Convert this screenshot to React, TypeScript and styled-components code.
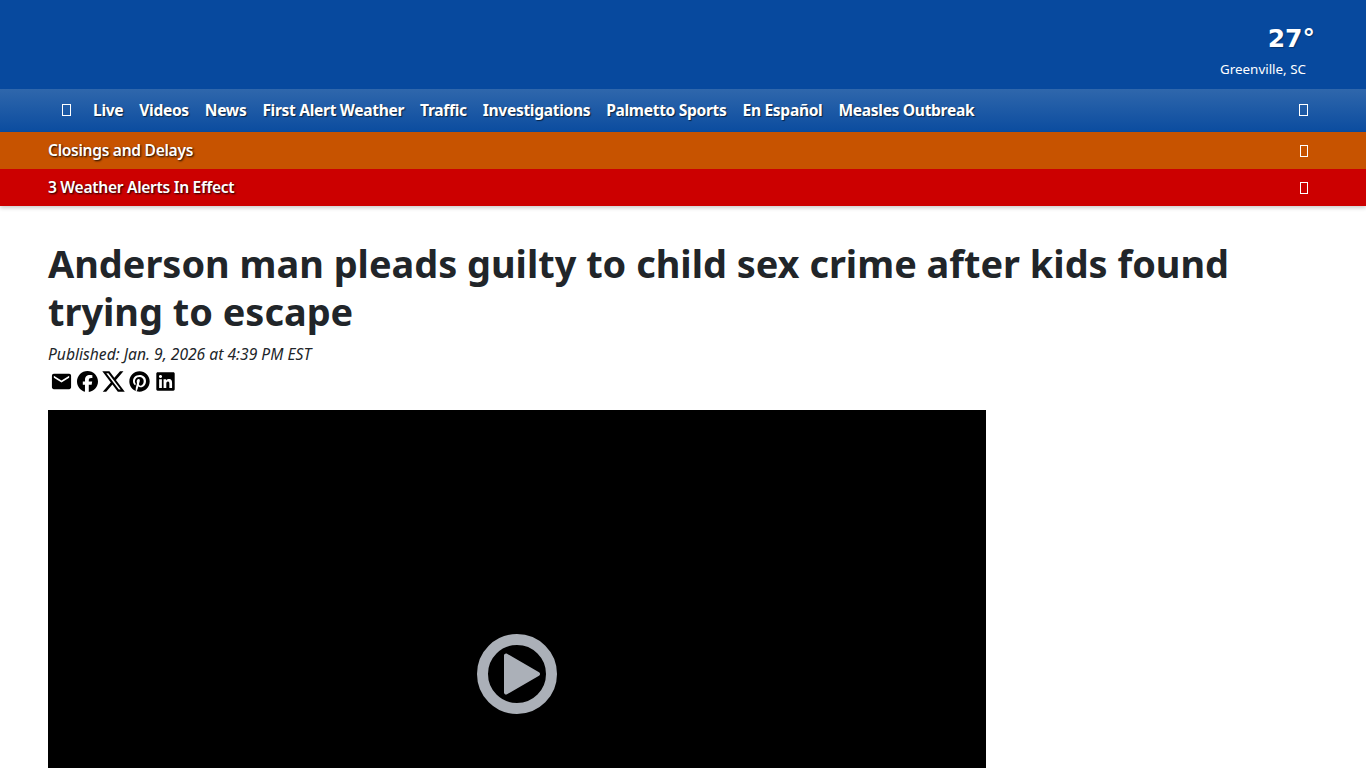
import React from 'react';
import styled, { createGlobalStyle } from 'styled-components';
import { MdEmail } from 'react-icons/md';
import { FaFacebook, FaLinkedin, FaPinterest, FaXTwitter } from 'react-icons/fa6';

const GlobalStyle = createGlobalStyle`
  html, body {
    margin: 0;
    padding: 0;
    background: #fff;
  }
  body {
    font-family: "Noto Sans", "Open Sans", sans-serif;
    color: #212529;
    overflow: hidden;
  }
`;

const Page = styled.div`
  height: 768px;
  overflow: hidden;
`;

// Banner with the weather
const TopBanner = styled.header`
  height: 89px;
  background-color: #07499e;
  display: flex;
  justify-content: flex-end;
  padding-right: 52px;
`;

const Weather = styled.div`
  display: flex;
  flex-direction: column;
  align-items: flex-end;
  color: #fff;
  padding-top: 22px;
`;

const Temperature = styled.div`
  font-family: "DejaVu Sans", sans-serif;
  font-weight: 700;
  font-size: 25px;
  line-height: 34px;
  margin-right: -1px;
  text-shadow: 1px 1px 1px rgba(0, 0, 0, 0.3);
`;

const City = styled.div`
  font-size: 13.4px;
  line-height: 18px;
  margin-top: 4px;
  margin-right: 8px;
`;

const Nav = styled.nav`
  height: 43px;
  padding: 0 58px 2px 62px;
  box-sizing: border-box;
  background: linear-gradient(to bottom, #2f67ac 0%, #0b4c9f 100%);
  display: flex;
  align-items: center;
`;

const NavLinks = styled.div`
  display: flex;
  align-items: center;
  gap: 16px;
  flex: 1;
  margin-left: 22px;
`;

const NavLink = styled.a`
  color: #fff;
  font-size: 15.6px;
  font-weight: 700;
  letter-spacing: -0.33px;
  text-shadow: 1px 1px 1px rgba(0, 0, 0, 0.6);
  white-space: nowrap;
`;

// The icon font is missing in the picture, so each icon is an empty box
const MissingGlyph = styled.span<{ $width: number }>`
  display: block;
  box-sizing: border-box;
  width: ${(p) => p.$width}px;
  height: 12px;
  border: 1px solid #fff;
  flex: none;
`;

const AlertBar = styled.div<{ $color: string }>`
  height: 37px;
  box-sizing: border-box;
  padding: 0 58px 2px 48px;
  background-color: ${(p) => p.$color};
  display: flex;
  align-items: center;
  justify-content: space-between;
  color: #fff;
  font-size: 15.6px;
  font-weight: 600;
  letter-spacing: -0.3px;
  text-shadow: 1px 1px 2px rgba(0, 0, 0, 0.9);

  ${MissingGlyph} {
    margin-top: 2px;
  }
`;

const Alerts = styled.div`
  box-shadow: 0 2px 4px rgba(0, 0, 0, 0.2);
  position: relative;
`;

const Article = styled.main`
  padding: 33px 48px 0;
`;

const Headline = styled.h1`
  margin: 0;
  font-size: 37.9px;
  line-height: 48px;
  font-weight: 700;
  color: #212529;
`;

const Published = styled.div`
  font-size: 15.65px;
  font-style: italic;
  line-height: 22px;
  margin-top: 8px;
  color: #212529;
`;

const ShareRow = styled.div`
  display: flex;
  margin-top: 3px;
  height: 26px;
`;

const ShareButton = styled.a<{ $size?: number }>`
  width: 26px;
  height: 26px;
  display: flex;
  align-items: center;
  justify-content: center;
  color: #000;
  font-size: ${(p) => p.$size ?? 21}px;
`;

const Video = styled.div`
  width: 938px;
  aspect-ratio: 16 / 9;
  margin-top: 16px;
  background: #000;
  display: flex;
  align-items: center;
  justify-content: center;
`;

const PlayIcon = () => (
  <svg width="80" height="80" viewBox="0 0 80 80" fill="none">
    <circle cx="40" cy="40" r="34.5" stroke="#abb0b8" strokeWidth="11" />
    <path
      d="M27 21.5c0-1.6 1.7-2.5 3-1.8l32 18.6c1.4.7 1.4 2.7 0 3.4l-32 18.6c-1.3.7-3-.2-3-1.8z"
      fill="#abb0b8"
    />
  </svg>
);

const links = [
  'Live',
  'Videos',
  'News',
  'First Alert Weather',
  'Traffic',
  'Investigations',
  'Palmetto Sports',
  'En Español',
  'Measles Outbreak',
];

const App: React.FC = () => {
  return (
    <Page>
      <GlobalStyle />
      <TopBanner>
        <Weather>
          <Temperature>27°</Temperature>
          <City>Greenville, SC</City>
        </Weather>
      </TopBanner>
      <Nav>
        <MissingGlyph $width={9} />
        <NavLinks>
          {links.map((l) => (
            <NavLink key={l}>{l}</NavLink>
          ))}
        </NavLinks>
        <MissingGlyph $width={9} />
      </Nav>
      <Alerts>
        <AlertBar $color="#c75300">
          Closings and Delays
          <MissingGlyph $width={8} />
        </AlertBar>
        <AlertBar $color="#cc0000">
          3 Weather Alerts In Effect
          <MissingGlyph $width={8} />
        </AlertBar>
      </Alerts>
      <Article>
        <Headline>Anderson man pleads guilty to child sex crime after kids found trying to escape</Headline>
        <Published>Published: Jan. 9, 2026 at 4:39 PM EST</Published>
        <ShareRow>
          <ShareButton $size={23}><MdEmail /></ShareButton>
          <ShareButton><FaFacebook /></ShareButton>
          <ShareButton $size={25}><FaXTwitter /></ShareButton>
          <ShareButton><FaPinterest /></ShareButton>
          <ShareButton><FaLinkedin /></ShareButton>
        </ShareRow>
        <Video>
          <PlayIcon />
        </Video>
      </Article>
    </Page>
  );
};

export default App;
